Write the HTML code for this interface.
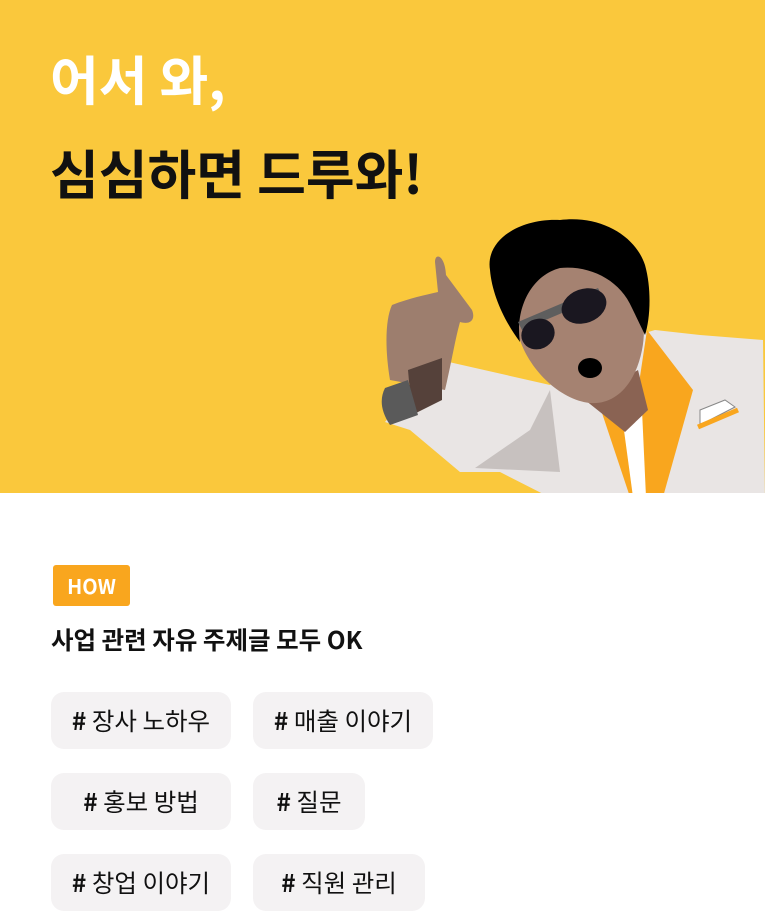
<!DOCTYPE html>
<html><head><meta charset="utf-8"><style>
body{margin:0;width:765px;height:911px;overflow:hidden;background:#fff;font-family:"Noto Sans CJK KR","Liberation Sans",sans-serif;}
.hero{position:absolute;left:0;top:0;width:765px;height:493px;background:#FAC83C;overflow:hidden}
.t{position:absolute;left:50px;font-weight:700;font-size:53px;line-height:1;letter-spacing:0}
.how{position:absolute;left:53px;top:565px;width:77px;height:41px;background:#F9A61E;border-radius:3px;color:#fff;font-weight:700;font-size:20px;line-height:41px;text-align:center}
.sub{position:absolute;left:51px;top:623px;font-weight:700;font-size:24.5px;line-height:34px;color:#111}
.chip{position:absolute;height:57px;border-radius:13px;background:#F4F2F3;font-size:24.5px;line-height:57px;text-align:center;color:#111}
.chip b{font-weight:700}
</style></head><body>
<div class="hero">
<div class="t" style="top:52px;color:#fff">어서 와,</div>
<div class="t" style="top:146px;color:#111">심심하면 드루와!</div>
<svg style="position:absolute;left:380px;top:210px" width="385" height="290" viewBox="0 0 385 290">
<path d="M60 150 L170 175 L225 135 L275 120 L320 125 L383 130 L385 290 L175 290 L120 262 L80 262 L30 220 L5 212 Z" fill="#E9E5E4"/>
<path d="M95 258 L180 262 L170 180 L150 220 Z" fill="#C7C1BF"/>
<path d="M267 120 L313 180 L283 287 L262 287 L255 200 Z" fill="#F9A61E"/>
<path d="M220 197 L255 205 L262 287 L250 287 Z" fill="#F9A61E"/>
<path d="M243 213 L262 200 L266 287 L253 287 Z" fill="#fff"/>
<path d="M205 190 L258 160 L268 200 L245 222 Z" fill="#8A6353"/>
<ellipse cx="250" cy="85" rx="11" ry="18" fill="#A58271"/>
<path d="M135 75 C150 50 200 45 235 60 C260 75 268 110 262 140 C255 175 235 195 210 193 C180 190 150 160 140 130 C132 110 130 90 135 75Z" fill="#A58271"/>
<path d="M110 60 C105 30 140 8 180 10 C220 5 255 25 265 55 C272 80 270 110 265 125 L252 98 C240 70 210 55 180 58 C150 66 135 100 140 132 C125 112 112 85 110 60Z" fill="#000"/>
<path d="M138 112 L218 78 L222 86 L142 120Z" fill="#5E5E5E"/>
<ellipse cx="158" cy="124" rx="17" ry="15" fill="#1A1720" transform="rotate(-25 158 124)"/>
<ellipse cx="204" cy="96" rx="23" ry="17" fill="#1A1720" transform="rotate(-20 204 96)"/>
<ellipse cx="210" cy="158" rx="12" ry="10" fill="#000"/>
<path d="M10 170 C5 140 5 110 12 95 C30 88 45 85 58 82 L55 52 C55 42 65 45 66 65 L92 100 C96 110 90 115 80 112 C75 130 72 150 65 180Z" fill="#9D7E6E"/>
<path d="M28 160 L62 148 L62 190 L32 205 Z" fill="#55413A"/>
<path d="M5 178 L28 170 L38 205 L10 215 C0 200 0 188 5 178Z" fill="#5A5A5A"/>
<path d="M320 200 L345 190 L355 197 L320 215Z" fill="#fff" stroke="#888" stroke-width="1"/>
<path d="M318 217 L358 200" stroke="#F9A61E" stroke-width="5"/>
</svg>
</div>
<div class="how">HOW</div>
<div class="sub">사업 관련 자유 주제글 모두 OK</div>
<div class="chip" style="left:51px;top:692px;width:180px"><b>#</b> 장사 노하우</div>
<div class="chip" style="left:253px;top:692px;width:180px"><b>#</b> 매출 이야기</div>
<div class="chip" style="left:51px;top:773px;width:180px"><b>#</b> 홍보 방법</div>
<div class="chip" style="left:253px;top:773px;width:112px"><b>#</b> 질문</div>
<div class="chip" style="left:51px;top:854px;width:180px"><b>#</b> 창업 이야기</div>
<div class="chip" style="left:253px;top:854px;width:172px"><b>#</b> 직원 관리</div>
</body></html>
